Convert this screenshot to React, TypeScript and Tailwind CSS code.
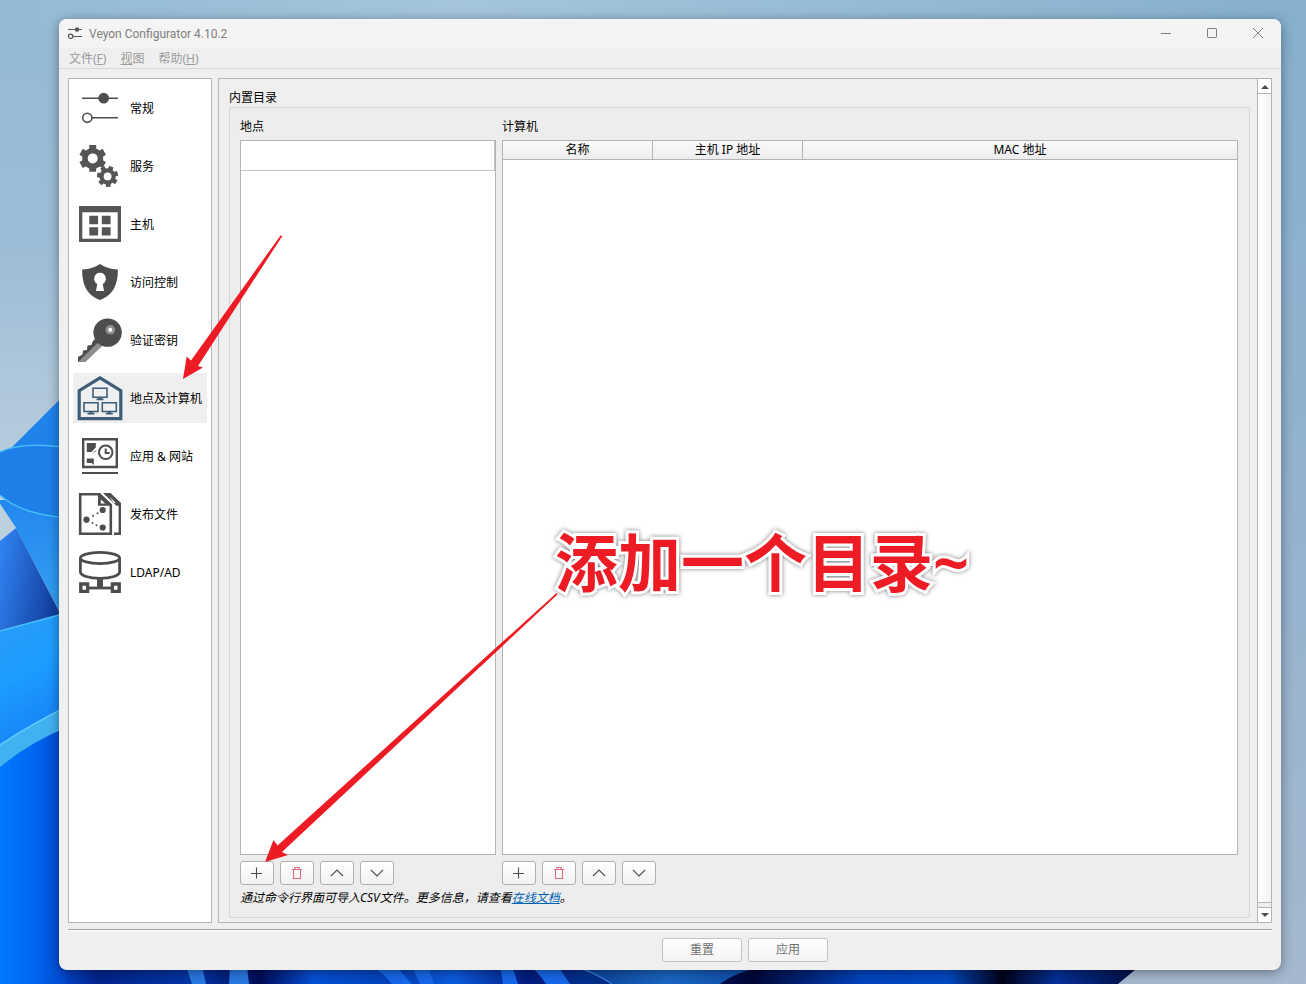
import { useState, type ReactNode } from "react";

interface NavItem {
  id: string;
  label: string;
  icon: ReactNode;
}

// Outline of a cog with flat teeth, used by the "service" icon
function gearPath(cx: number, cy: number, outer: number, inner: number, teeth: number, start: number) {
  const step = (Math.PI * 2) / teeth;
  const points: string[] = [];
  for (let i = 0; i < teeth; i++) {
    const a = start + i * step;
    const corners: [number, number][] = [
      [inner, -0.32],
      [outer, -0.24],
      [outer, 0.24],
      [inner, 0.32],
    ];
    corners.forEach(([r, f]) => {
      points.push(`${(cx + r * Math.cos(a + f * step)).toFixed(2)} ${(cy + r * Math.sin(a + f * step)).toFixed(2)}`);
    });
  }
  return `M${points.join("L")}Z`;
}

const iconClass = "w-12 h-12 shrink-0";

const GeneralIcon = (
  <svg viewBox="0 0 48 48" className={iconClass} fill="none" stroke="#4d4d4d">
    <path d="M6 14.3H42M16 33.8H42" strokeWidth="1.6" />
    <circle cx="27.7" cy="14.2" r="5.4" fill="#4d4d4d" stroke="none" />
    <circle cx="11.3" cy="33.8" r="4.6" strokeWidth="1.6" />
  </svg>
);

const ServiceIcon = (
  <svg viewBox="0 0 48 48" className={iconClass}>
    <path d={gearPath(16.7, 16.4, 13.8, 10.6, 6, -Math.PI / 2)} fill="#555555" />
    <circle cx="16.7" cy="16.4" r="5" fill="#ffffff" />
    <path d={gearPath(31.6, 34.4, 10.8, 8.2, 7, -1.2)} fill="#555555" />
    <circle cx="31.6" cy="34.4" r="3.9" fill="#ffffff" />
  </svg>
);

const MasterIcon = (
  <svg viewBox="0 0 48 48" className={iconClass}>
    <path d="M3 6H45V42H3Z" fill="#555555" />
    <path d="M6.3 12.3H41.7V38.8H6.3Z" fill="#ffffff" />
    <path d="M13.3 15.8h8.8v8.4h-8.8zM25.8 15.8h8.8v8.4h-8.8zM13.3 27.2h8.8v8.4h-8.8zM25.8 27.2h8.8v8.4h-8.8z" fill="#555555" />
  </svg>
);

const AccessIcon = (
  <svg viewBox="0 0 48 48" className={iconClass}>
    <path d="M24 6C20 9 13 11.3 6.2 11.5C6 25 10 37 24 42C38 37 42 25 41.8 11.5C35 11.3 28 9 24 6Z" fill="#4d4d4d" />
    <path d="M24 14.8a6 6 0 0 1 2.8 11.2L28 33H20L21.2 26A6 6 0 0 1 24 14.8Z" fill="#ffffff" />
  </svg>
);

const KeyIcon = (
  <svg viewBox="0 0 48 48" className={iconClass}>
    <path d="M20 22L16.5 25.5L15.5 29L11.5 29.5L11 34L7 34.5L6.5 38.5L2 41V46H8L28 28Z" fill="#4d4d4d" />
    <path d="M2.5 45.5L22 26.5L26 30L9.5 46H2.5Z" fill="#8e8e8e" />
    <circle cx="31.6" cy="16.6" r="14.2" fill="#4d4d4d" />
    <circle cx="34.3" cy="13.8" r="4.8" fill="#8e8e8e" />
    <circle cx="34.3" cy="13.8" r="2.1" fill="#ffffff" />
  </svg>
);

const LocationsIcon = (
  <svg viewBox="0 0 48 48" className={iconClass} fill="none" stroke="#3d5d78">
    <path d="M3.2 44.7V16.6L24 3.8L44.8 16.6V44.7Z" strokeWidth="3.2" />
    <g strokeWidth="1.6">
      <path d="M17 14.3H31V23.2H17ZM8 28.7H22V37.5H8ZM26.3 28.7H40.3V37.5H26.3Z" />
      <path d="M20.5 25.3H27.5M11.5 39.6H18.5M29.8 39.6H36.8" strokeWidth="1.8" />
      <path d="M24 23V25M15 37.5V40M33.3 37.5V40" strokeWidth="3" />
    </g>
  </svg>
);

const WebsitesIcon = (
  <svg viewBox="0 0 48 48" className={iconClass} fill="none" stroke="#4d4d4d">
    <path d="M7.2 7.2H40.8V35H7.2Z" strokeWidth="2.4" />
    <path d="M6 41H42" strokeWidth="2" />
    <path d="M10.8 11H19.8V15.5L15.5 20H10.8ZM10.8 26.5H17.8V33L15.5 31H10.8Z" fill="#4d4d4d" stroke="none" />
    <path d="M18 20.5L20 18.5" strokeWidth="1" />
    <circle cx="29.7" cy="20.3" r="6.8" strokeWidth="2" />
    <path d="M29.7 16.5V21H33.5" strokeWidth="2" />
  </svg>
);

const FilesIcon = (
  <svg viewBox="0 0 48 48" className={iconClass} fill="none" stroke="#4d4d4d">
    <path d="M4.2 4.2H23.5L34.8 15V43.7H4.2Z" strokeWidth="2.6" />
    <path d="M22 3.5L35.5 15.8H22Z" fill="#4d4d4d" stroke="none" />
    <path d="M24.8 9.5L29.3 13.6H24.8Z" fill="#ffffff" stroke="none" />
    <path d="M27 3H34.5L45 13V15.8H40.5Z" fill="#4d4d4d" stroke="none" />
    <path d="M33.6 6.4L37.5 12.8L40 13.2Z" fill="#ffffff" stroke="none" />
    <path d="M43.8 14V43.7H38" strokeWidth="2.4" />
    <g fill="#4d4d4d" stroke="none">
      <circle cx="26.7" cy="20" r="3.1" />
      <circle cx="10.5" cy="29.7" r="3.1" />
      <circle cx="26.7" cy="37.5" r="3.1" />
      <circle cx="21.5" cy="23.3" r="1" />
      <circle cx="17" cy="25.7" r="1" />
      <circle cx="16.5" cy="33" r="1" />
      <circle cx="20.5" cy="35.3" r="1" />
    </g>
  </svg>
);

const LdapIcon = (
  <svg viewBox="0 0 48 48" className={iconClass} fill="none" stroke="#4d4d4d">
    <ellipse cx="24" cy="10" rx="19.6" ry="5.6" strokeWidth="2.8" />
    <path d="M4.4 10V24C4.4 27.5 13 30.3 24 30.3S43.6 27.5 43.6 24V10" strokeWidth="2.8" />
    <path d="M24 31V40" strokeWidth="6" />
    <path d="M12 40H36" strokeWidth="2.8" />
    <path d="M4.8 36H11.6V43.4H4.8ZM36.4 36H43.2V43.4H36.4Z" strokeWidth="3.4" />
  </svg>
);

const navItems: NavItem[] = [
  { id: "general", label: "常规", icon: GeneralIcon },
  { id: "service", label: "服务", icon: ServiceIcon },
  { id: "master", label: "主机", icon: MasterIcon },
  { id: "access", label: "访问控制", icon: AccessIcon },
  { id: "keys", label: "验证密钥", icon: KeyIcon },
  { id: "locations", label: "地点及计算机", icon: LocationsIcon },
  { id: "websites", label: "应用 & 网站", icon: WebsitesIcon },
  { id: "files", label: "发布文件", icon: FilesIcon },
  { id: "ldap", label: "LDAP/AD", icon: LdapIcon },
];

function Wallpaper() {
  return (
    <svg
      viewBox="0 0 1306 984"
      preserveAspectRatio="none"
      className="absolute inset-0 w-full h-full"
      aria-hidden="true"
    >
      <defs>
        <linearGradient id="sky-left" x1="0" y1="0" x2="0" y2="1">
          <stop offset="0" stopColor="#94bad5" />
          <stop offset="0.25" stopColor="#9dbdd7" />
          <stop offset="0.5" stopColor="#bccfdd" />
          <stop offset="1" stopColor="#c3cfda" />
        </linearGradient>
        <linearGradient id="sky-top" x1="0" y1="0" x2="1" y2="0">
          <stop offset="0" stopColor="#94bad5" />
          <stop offset="0.35" stopColor="#a4c5dc" />
          <stop offset="1" stopColor="#86b0cd" />
        </linearGradient>
        <linearGradient id="sky-right" x1="0" y1="0" x2="0" y2="1">
          <stop offset="0" stopColor="#86b0cd" />
          <stop offset="0.5" stopColor="#93b2cf" />
          <stop offset="1" stopColor="#a5b8ce" />
        </linearGradient>
        <linearGradient id="cone" x1="0" y1="0" x2="0" y2="1">
          <stop offset="0" stopColor="#2387ee" />
          <stop offset="1" stopColor="#37a5f2" />
        </linearGradient>
        <linearGradient id="fold" x1="0" y1="0" x2="1" y2="0.3">
          <stop offset="0" stopColor="#3286f6" />
          <stop offset="1" stopColor="#133f9e" />
        </linearGradient>
        <linearGradient id="petal" x1="0" y1="0" x2="0.3" y2="1">
          <stop offset="0" stopColor="#2a9cf8" />
          <stop offset="0.5" stopColor="#1c9dff" />
          <stop offset="1" stopColor="#1681f6" />
        </linearGradient>
        <linearGradient id="base" x1="0" y1="0" x2="1" y2="0">
          <stop offset="0" stopColor="#0079ff" />
          <stop offset="0.5" stopColor="#0066f2" />
          <stop offset="1" stopColor="#0242c4" />
        </linearGradient>
        <linearGradient id="strip" x1="0" y1="0" x2="1" y2="0">
          <stop offset="0" stopColor="#0242c4" />
          <stop offset="0.03" stopColor="#02248c" />
          <stop offset="0.12" stopColor="#0236a6" />
          <stop offset="0.18" stopColor="#010b58" />
          <stop offset="0.23" stopColor="#0550d6" />
          <stop offset="0.31" stopColor="#0340b8" />
          <stop offset="0.36" stopColor="#0c5ce0" />
          <stop offset="0.43" stopColor="#021c80" />
          <stop offset="0.48" stopColor="#02308f" />
          <stop offset="0.64" stopColor="#010738" />
          <stop offset="0.74" stopColor="#0144c0" />
          <stop offset="0.82" stopColor="#0149c4" />
          <stop offset="0.87" stopColor="#000219" />
          <stop offset="0.92" stopColor="#05309a" />
          <stop offset="1" stopColor="#010b3a" />
        </linearGradient>
        <linearGradient id="wave" x1="0" y1="0" x2="1" y2="0">
          <stop offset="0" stopColor="#0a3c94" />
          <stop offset="0.5" stopColor="#1a66c2" />
          <stop offset="1" stopColor="#0c48a6" />
        </linearGradient>
      </defs>
      <path d="M0 0H1306V984H0Z" fill="url(#sky-right)" />
      <path d="M0 0H653V984H0Z" fill="url(#sky-left)" />
      <path d="M0 0H1306V40H0Z" fill="url(#sky-top)" />

      <path d="M12 447C26 434 44 414 70 390V455H12Z" fill="#1f83ea" />
      <path d="M0 504L16 528L70 632V500H0Z" fill="url(#cone)" />
      <path d="M0 452C14 445 36 443 70 448V519C36 516 14 508 0 495Z" fill="#1f7fe9" />
      <path d="M0 452C14 445 36 443 70 448M0 495C14 508 36 516 70 518" fill="none" stroke="#43bdf8" strokeWidth="1.5" />
      <path d="M0 504V541L16 528Z" fill="#bccfdd" />
      <path d="M0 541L16 528L62 617L0 632Z" fill="url(#fold)" />
      <path d="M0 631L70 612V710L0 750Z" fill="url(#petal)" />
      <path d="M0 631L70 612" stroke="#48c0fa" strokeWidth="1.5" />
      <path d="M0 760Q26 742 70 722V984H0Z" fill="url(#base)" />
      <path d="M0 745Q28 726 70 705V726Q30 742 0 767Z" fill="#42b1f2" />
      <path d="M0 745Q28 726 70 705" fill="none" stroke="#5ecbf8" strokeWidth="1.5" />

      <path d="M66 964H1142L1118 984H66Z" fill="url(#strip)" />
      <path d="M186 966H202L206 984H192ZM230 966H247L249 984H229Z" fill="#2a78e4" />
      <path d="M372 966Q384 974 392 984H412L396 966ZM412 966L420 984H434L428 966ZM500 966L503 984H518L512 966ZM530 966Q540 974 546 984H570L558 966Z" fill="#1668ea" />
      <path d="M574 966H764Q734 973 720 984H612Q596 973 574 966Z" fill="url(#wave)" />
      <path d="M574 966Q596 973 612 984" fill="none" stroke="#2e7ad8" strokeWidth="1.5" />
    </svg>
  );
}

function Annotations() {
  return (
    <div className="absolute inset-0 pointer-events-none">
      <svg viewBox="0 0 1306 984" preserveAspectRatio="none" className="absolute inset-0 w-full h-full" aria-hidden="true">
        <g fill="#ed1c24">
          <path d="M183 379L186.7 356.5L191 360.5L280.7 235.2L282.2 236.2L198 366L203 367.5Z" />
          <path d="M265 862L273.5 840L277.5 845.5L556.5 593L557.5 594.5L282 852L288 855Z" />
        </g>
      </svg>
      <p className="absolute left-[555px] top-[524px] whitespace-nowrap font-['Noto_Sans','Noto_Sans_CJK_SC',sans-serif] text-[63px] leading-[76px] font-bold text-[#ed1c24] [-webkit-text-stroke:6px_white] [paint-order:stroke_fill] drop-shadow-[0_0_2px_rgba(0,0,0,0.5)]">
        添加一个目录~
      </p>
    </div>
  );
}

interface ToolButtonProps {
  label: string;
  children: ReactNode;
}

function ToolButton({ label, children }: ToolButtonProps) {
  return (
    <button
      aria-label={label}
      className="w-[34px] h-6 flex items-center justify-center rounded-[3px] border border-[#b0b0b0] bg-linear-to-b from-white to-[#f1f1f1]"
    >
      <svg viewBox="0 0 16 16" className="w-4 h-4" fill="none" stroke="#4d4d4d" strokeWidth="1.1">
        {children}
      </svg>
    </button>
  );
}

function ListToolbar() {
  return (
    <div className="flex gap-1.5 mt-1.5">
      <ToolButton label="添加">
        <path d="M7.5 2.5V13.5M2 8.5H13" />
      </ToolButton>
      <ToolButton label="删除">
        <path d="M4.5 5V13.5H11.5V5M3 4.5H13M6 4V2.5H10V4" stroke="#dc6b80" />
      </ToolButton>
      <ToolButton label="上移">
        <path d="M2 11L8 5L14 11" />
      </ToolButton>
      <ToolButton label="下移">
        <path d="M2 5L8 11L14 5" />
      </ToolButton>
    </div>
  );
}

function TitleBar() {
  return (
    <header className="h-[29px] flex items-start justify-between bg-[#f4f4f4] pl-2 text-[#808080]">
      <div className="h-7 flex items-center gap-1.5">
        <svg viewBox="0 0 16 16" className="w-4 h-4" fill="none" stroke="#555555" strokeWidth="1.2">
          <path d="M1 4.5H15M6 11.5H15" />
          <circle cx="10" cy="4.5" r="1.6" fill="#555555" />
          <circle cx="3.6" cy="11.3" r="2.2" />
        </svg>
        <h1 className="pt-0.5 font-[Roboto,sans-serif]">Veyon Configurator 4.10.2</h1>
      </div>
      <div className="flex">
        <button aria-label="最小化" className="w-[46px] h-7 flex items-center justify-center">
          <svg viewBox="0 0 12 12" className="w-3 h-3" stroke="#808080" fill="none">
            <path d="M1 6.5H11" />
          </svg>
        </button>
        <button aria-label="最大化" className="w-[46px] h-7 flex items-center justify-center">
          <svg viewBox="0 0 12 12" className="w-3 h-3" stroke="#808080" fill="none">
            <rect x="1.5" y="1.5" width="9" height="9" rx="0.6" />
          </svg>
        </button>
        <button aria-label="关闭" className="w-[46px] h-7 flex items-center justify-center">
          <svg viewBox="0 0 12 12" className="w-3 h-3" stroke="#808080" fill="none">
            <path d="M1 1L11 11M11 1L1 11" />
          </svg>
        </button>
      </div>
    </header>
  );
}

function ScrollBar() {
  return (
    <div className="w-[14px] flex flex-col border-l border-[#b4b4b4] bg-[#efefef]">
      <button aria-label="向上滚动" className="h-[15px] pt-0.5 flex items-center justify-center bg-white border-b border-[#b4b4b4]">
        <svg viewBox="0 0 8 4" className="w-2 h-1" fill="#4d4d4d">
          <path d="M0 4L4 0L8 4Z" />
        </svg>
      </button>
      <div className="flex-1 mb-1 bg-linear-to-r from-white to-[#f3f3f3] border-b border-[#b4b4b4]" />
      <button aria-label="向下滚动" className="h-[15px] flex items-center justify-center bg-white border-t border-[#b4b4b4]">
        <svg viewBox="0 0 8 4" className="w-2 h-1" fill="#4d4d4d">
          <path d="M0 0L4 4L8 0Z" />
        </svg>
      </button>
    </div>
  );
}

export default function App() {
  const [activeItem, setActiveItem] = useState("locations");
  const [location, setLocation] = useState("");

  return (
    <div className="relative min-h-screen flex pt-[19px] pr-[25px] pb-[14px] pl-[59px] overflow-hidden font-['Noto_Sans','Noto_Sans_CJK_SC',sans-serif] text-[12px] leading-[18px] text-black">
      <Wallpaper />

      {/* Window */}
      <div className="relative flex-1 min-w-0 flex flex-col overflow-hidden rounded-lg bg-[#efefef] shadow-[0_2px_12px_rgba(0,0,0,0.4)]">
        <TitleBar />

        <nav className="h-[21px] flex items-center gap-[14px] pt-0.5 pl-[10px] border-b border-[#d6d6d6] text-[#9c9c9c]">
          <button>文件(<u>F</u>)</button>
          <button><u>视</u>图</button>
          <button>帮助(<u>H</u>)</button>
        </nav>

        <main className="flex-1 flex gap-1.5 px-[9px] pt-[9px] pb-1.5">
          {/* Page list */}
          <nav className="w-36 shrink-0 flex flex-col gap-2 p-1 bg-white border border-[#b4b4b4]">
            {navItems.map((item) => (
              <button
                key={item.id}
                onClick={() => setActiveItem(item.id)}
                className={`h-[50px] flex items-center gap-1.5 pl-[3px] whitespace-nowrap text-left ${
                  activeItem === item.id ? "bg-[#efefef]" : ""
                }`}
              >
                {item.icon}
                <span className="pt-0.5">{item.label}</span>
              </button>
            ))}
          </nav>

          {/* Page content */}
          <div className="flex-1 min-w-0 flex border border-[#b4b4b4]">
            <section className="flex-1 min-w-0 flex flex-col pt-[10px] pr-[7px] pb-1 pl-[10px]">
              <h2>内置目录</h2>
              <div className="flex-1 flex flex-col py-[10px] pl-[10px] pr-[11px] bg-[#ededed] border border-[#d6d6d6] rounded-[2px]">
                <div className="flex-1 flex gap-1.5">
                  <div className="w-64 shrink-0 flex flex-col">
                    <label htmlFor="location-name">地点</label>
                    <div className="flex-1 mt-1 bg-white border border-[#b4b4b4]">
                      <input
                        id="location-name"
                        type="text"
                        value={location}
                        onChange={(e) => setLocation(e.target.value)}
                        className="block w-full h-[30px] px-1 bg-white border-r border-b border-[#c4c4c4] outline-none"
                      />
                    </div>
                    <ListToolbar />
                  </div>

                  <div className="flex-1 min-w-0 flex flex-col">
                    <h3>计算机</h3>
                    <div className="flex-1 mt-1 bg-white border border-[#b4b4b4]">
                      <table aria-label="计算机" className="w-full table-fixed border-separate border-spacing-0">
                        <thead>
                          <tr className="bg-linear-to-b from-[#fbfbfb] to-[#ebebeb]">
                            <th className="w-[150px] p-0 font-normal border-r border-b border-[#b4b4b4]">名称</th>
                            <th className="w-[150px] p-0 font-normal border-r border-b border-[#b4b4b4]">主机 IP 地址</th>
                            <th className="p-0 font-normal border-b border-[#b4b4b4]">MAC 地址</th>
                          </tr>
                        </thead>
                        <tbody />
                      </table>
                    </div>
                    <ListToolbar />
                  </div>
                </div>

                <p className="mt-1 italic">
                  通过命令行界面可导入CSV文件。更多信息，请查看
                  <a href="#docs" className="text-[#0064b4] underline">在线文档</a>。
                </p>
              </div>
            </section>
            <ScrollBar />
          </div>
        </main>

        <footer className="mx-[9px] pt-2 pb-2 pl-[150px] flex justify-center gap-1.5 border-t border-[#a0a0a0] shadow-[inset_0_1px_0_white]">
          <button className="w-20 h-6 rounded-[3px] border border-[#c2c2c2] bg-linear-to-b from-white to-[#f3f3f3] text-[#707070]">
            重置
          </button>
          <button className="w-20 h-6 rounded-[3px] border border-[#c2c2c2] bg-linear-to-b from-white to-[#f3f3f3] text-[#707070]">
            应用
          </button>
        </footer>
      </div>

      <Annotations />
    </div>
  );
}
